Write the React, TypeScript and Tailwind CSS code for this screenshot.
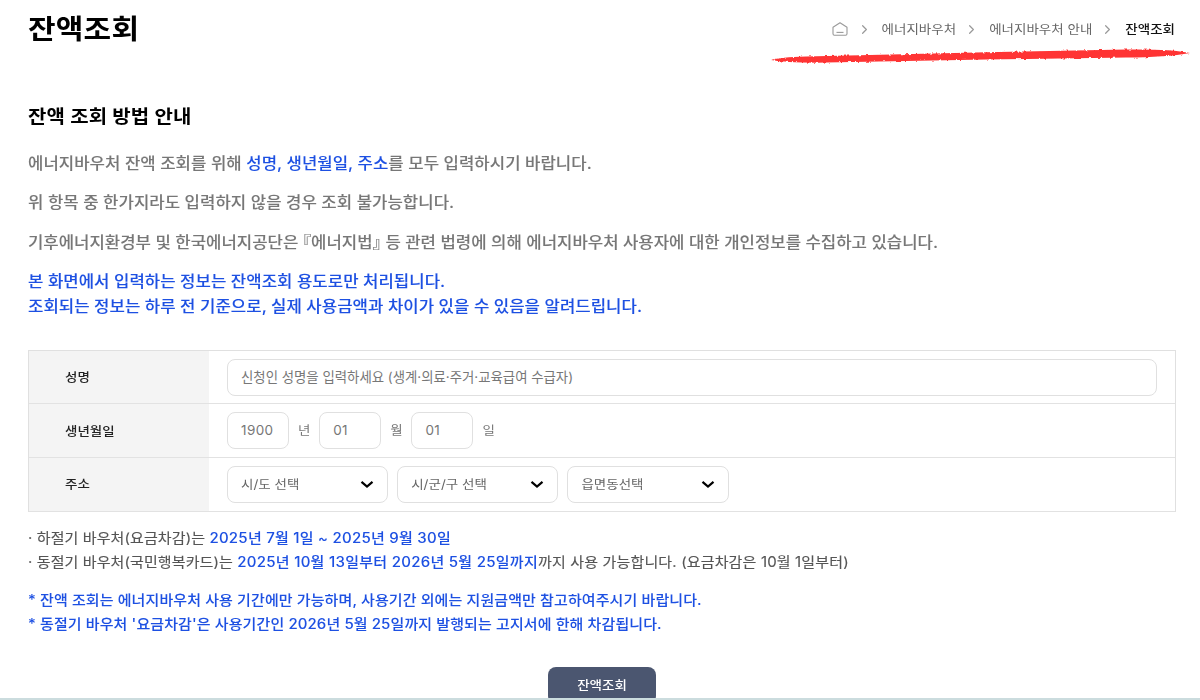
import { ChevronRight } from 'lucide-react'
import type { ReactNode } from 'react'

const crumbs = ['에너지바우처', '에너지바우처 안내']
const regions = ['시/도 선택', '시/군/구 선택', '읍면동선택']
const birth = [
  { value: '1900', unit: '년' },
  { value: '01', unit: '월' },
  { value: '01', unit: '일' },
]

function Row({ label, children }: { label: string; children: ReactNode }) {
  return (
    <div className="flex h-[53.6px] border-b border-[#e2e2e2]">
      <div className="flex w-[180px] shrink-0 items-center bg-[#f4f4f4] pl-9 text-[13.5px] font-medium text-[#222]">
        <span className="scale-y-92">{label}</span>
      </div>
      <div className="flex flex-1 items-center px-[18px]">{children}</div>
    </div>
  )
}

function Blue({ children }: { children: ReactNode }) {
  return <span className="font-medium text-[#1d50e2] [-webkit-text-stroke:0.05px]">{children}</span>
}

export default function App() {
  return (
    <div className="relative flex h-[700px] w-[1200px] flex-col overflow-hidden bg-white pr-6 pl-7 font-['Inter','Noto_Sans_CJK_KR',sans-serif] text-[#777]">
      <header className="flex h-[58px] shrink-0 items-center justify-between">
        <h1 className="scale-y-92 text-[30px] font-bold tracking-[0.2px] text-black">잔액조회</h1>
        <nav className="flex items-center pr-px text-[13.5px] text-[#666]">
          <svg width="16" height="14" viewBox="0 0 16 14" className="mr-px" fill="none" stroke="#999" strokeWidth="1.1">
            <path d="M1 5.2 8 .8l7 4.4v6.6a1.4 1.4 0 0 1-1.4 1.4H2.4A1.4 1.4 0 0 1 1 11.8z" strokeLinejoin="round" />
            <path d="M4.5 10.4h7" />
          </svg>
          {crumbs.map(crumb => (
            <div key={crumb} className="flex items-center">
              <ChevronRight className="mr-[10px] ml-[8px] size-[15px] text-[#999]" strokeWidth={1.9} />
              <span className="scale-y-92">{crumb}</span>
            </div>
          ))}
          <ChevronRight className="mr-[10px] ml-[8px] size-[15px] text-[#999]" strokeWidth={1.9} />
          <span className="scale-y-92 font-medium text-[#111]">잔액조회</span>
        </nav>
      </header>

      {/* marker underline */}
      <svg className="absolute top-[44px] left-[766px]" width="430" height="24" viewBox="0 0 430 24">
        <filter id="rough" x="-2%" y="-30%" width="104%" height="160%" colorInterpolationFilters="sRGB">
          <feTurbulence type="fractalNoise" baseFrequency="0.3" numOctaves="2" seed="4" />
          <feDisplacementMap in="SourceGraphic" scale="3" xChannelSelector="R" yChannelSelector="G" />
          <feGaussianBlur stdDeviation="0.7" />
        </filter>
        <path
          d="M5 16Q14 13 40 12.4L220 8.2 360 5.6Q404 5 424 9Q400 13.4 360 13.6L220 15.6 60 18.6Q20 19 5 16z"
          fill="#ff3434"
          filter="url(#rough)"
        />
      </svg>

      <section className="mt-[44.5px] font-medium">
        <h2 className="scale-y-92 text-[20px] leading-[28px] font-bold tracking-[0.2px] text-black">잔액 조회 방법 안내</h2>
        <div className="mt-[20px] space-y-[14.6px] text-[16.7px] leading-[25px] tracking-[0.05px] [-webkit-text-stroke:0.1px]">
          <p className="scale-y-92">
            에너지바우처 잔액 조회를 위해 <Blue>성명, 생년월일, 주소</Blue>를 모두 입력하시기 바랍니다.
          </p>
          <p className="scale-y-92">위 항목 중 한가지라도 입력하지 않을 경우 조회 불가능합니다.</p>
          <p className="scale-y-92 tracking-[0.02px] [font-feature-settings:'halt']">
            기후에너지환경부 및 한국에너지공단은 『에너지법』 등 관련 법령에 의해 에너지바우처 사용자에 대한 개인정보를 수집하고 있습니다.
          </p>
          <div className="text-[#1d50e2]">
            <p className="scale-y-92">본 화면에서 입력하는 정보는 잔액조회 용도로만 처리됩니다.</p>
            <p className="scale-y-92">조회되는 정보는 하루 전 기준으로, 실제 사용금액과 차이가 있을 수 있음을 알려드립니다.</p>
          </div>
        </div>
      </section>

      <form className="mt-[30.5px] border border-b-0 border-[#e0e0e0] text-[13.5px]">
        <Row label="성명">
          <input
            className="h-[37px] w-full rounded-lg border border-[#e0e0e0] px-[13px] pb-px text-[13.4px] placeholder:text-[#777]"
            placeholder="신청인 성명을 입력하세요 (생계·의료·주거·교육급여 수급자)"
          />
        </Row>
        <Row label="생년월일">
          {birth.map(({ value, unit }) => (
            <div key={unit} className="flex items-center">
              <input
                className="h-[37px] w-[62px] rounded-lg border border-[#e0e0e0] px-[13px] pb-px tracking-[0.4px] placeholder:text-[#777]"
                placeholder={value}
              />
              <span className="w-[30.2px] scale-y-92 pb-px pl-[9px]">{unit}</span>
            </div>
          ))}
        </Row>
        <Row label="주소">
          <div className="flex gap-[9px]">
            {regions.map(region => (
              <button
                key={region}
                type="button"
                className="flex h-[37px] w-[161.2px] items-center justify-between rounded-lg border border-[#e0e0e0] px-[13px] text-[#666]"
              >
                <span className="scale-y-92">{region}</span>
                <svg width="14" height="9" viewBox="0 0 14 9" fill="none" stroke="#000" strokeWidth="2.2">
                  <path d="M1.5 1.8 7 6.6l5.5-4.8" />
                </svg>
              </button>
            ))}
          </div>
        </Row>
      </form>

      <div className="mt-[14.5px] space-y-[15px] text-[15px] leading-[23.5px] tracking-[0.1px] text-[#555] [-webkit-text-stroke:0.15px]">
        <div>
          <p className="scale-y-92">
            · 하절기 바우처(요금차감)는{' '}
            <span className="tracking-[0.25px]">
              <Blue>2025년 7월 1일 ~ 2025년 9월 30일</Blue>
            </span>
          </p>
          <p className="scale-y-92">
            · 동절기 바우처(국민행복카드)는{' '}
            <span className="tracking-[0.28px]">
              <Blue>2025년 10월 13일부터 2026년 5월 25일까지</Blue>
            </span>
            <span className="tracking-[0.15px]">까지 사용 가능합니다. (요금차감은 10월 1일부터)</span>
          </p>
        </div>
        <div>
          <p className="scale-y-92">
            <Blue>* 잔액 조회는 에너지바우처 사용 기간에만 가능하며, 사용기간 외에는 지원금액만 참고하여주시기 바랍니다.</Blue>
          </p>
          <p className="scale-y-92">
            <Blue>* 동절기 바우처 '요금차감'은 사용기간인 2026년 5월 25일까지 발행되는 고지서에 한해 차감됩니다.</Blue>
          </p>
        </div>
      </div>

      <button className="mt-[32px] ml-[520px] h-[37px] w-[108px] shrink-0 rounded-lg bg-[#4b5670] text-[13.5px] font-medium text-white">
        <span className="inline-block scale-y-92">잔액조회</span>
      </button>
      <div className="absolute bottom-0 left-0 h-[2px] w-full bg-[#cbdcde]" />
    </div>
  )
}
